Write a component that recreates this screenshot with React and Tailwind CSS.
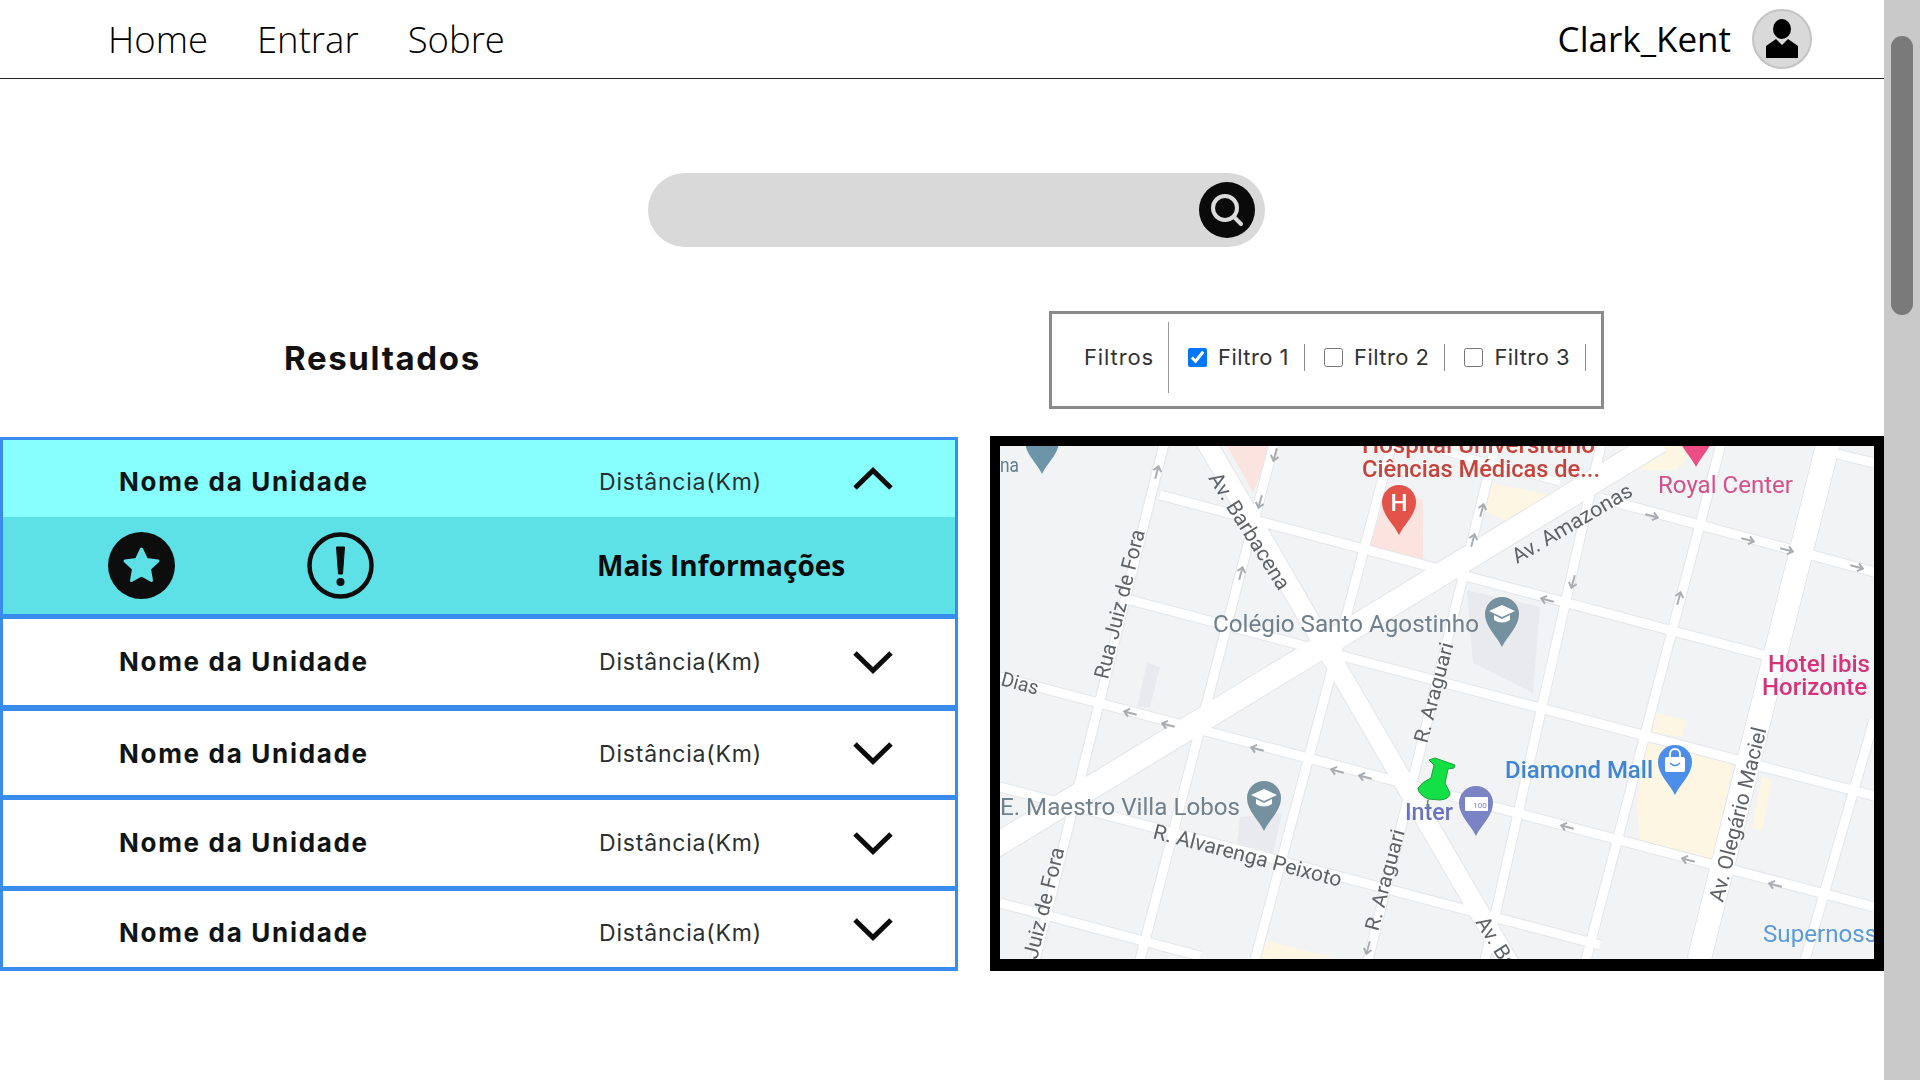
import React from 'react';

// Roads in page coordinates: [x1, y1, x2, y2, width]
const roads = [
  // E-W streets
  [1160, 495, 1790, 662, 9],
  [1600, 498, 1874, 572, 9],
  [1833, 453, 1874, 463, 9],
  [1130, 600, 1874, 796, 9],
  [1000, 677, 1874, 907, 9],
  [1000, 787, 1600, 945, 9],
  [1000, 903, 1200, 956, 9],
  [1440, 450, 1560, 482, 7],
  // N-S streets
  [1165, 440, 1035, 960, 9],
  [1275, 440, 1140, 960, 9],
  [1393, 440, 1255, 960, 9],
  [1497, 440, 1368, 960, 9],
  [1602, 440, 1485, 960, 9],
  [1722, 440, 1586, 960, 9],
  [1874, 720, 1805, 960, 9],
  // Avenues
  [1205, 440, 1510, 965, 19],
  [990, 849, 1660, 441, 23],
  [1829, 440, 1699, 960, 23],
];

const areas = [
  ['1370,547 1387,490 1423,500 1423,560', '#fbe3df'],
  ['1227,446 1273,446 1253,492', '#fbe3df'],
  ['1490,483 1567,498 1520,528 1483,510', '#fdf6e3'],
  ['1640,446 1700,446 1676,470 1620,470', '#fdf6e3'],
  ['1637,803 1647,743 1733,763 1713,860 1640,840', '#fdf6e3'],
  ['1656,713 1686,720 1682,737 1652,732', '#fdf6e3'],
  ['1762,777 1772,780 1762,830 1752,828', '#fdf6e3'],
  ['1263,940 1335,958 1258,959', '#fdf6e3'],
  ['1467,590 1540,607 1533,693 1473,663', '#e8eaed'],
  ['1240,817 1282,813 1273,853 1237,843', '#e8eaed'],
  ['1147,663 1160,667 1150,707 1137,707', '#e8eaed'],
];

// Direction arrows: [x, y, angle]
const arrows = [
  [1652, 516, 15], [1748, 540, 15], [1787, 550, 15], [1857, 567, 15],
  [1547, 600, 195], [1573, 582, 105], [1679, 598, 285], [1482, 510, 285], [1473, 540, 285],
  [1157, 472, 285], [1275, 455, 105], [1260, 502, 105], [1241, 573, 285], [1130, 713, 195],
  [1168, 725, 195], [1257, 749, 195], [1337, 771, 195], [1365, 777, 195], [1368, 948, 105],
  [1567, 827, 195], [1688, 860, 195], [1775, 885, 195],
];

const labels = [
  { t: 'na', x: 1000, y: 472, len: 19, size: 20, fill: '#5f7d8c' },
  { t: 'Hospital Universitário', x: 1362, y: 453, len: 233, size: 24, fill: '#c5443c', weight: 500 },
  { t: 'Ciências Médicas de...', x: 1362, y: 477, len: 238, size: 24, fill: '#c5443c', weight: 500 },
  { t: 'Royal Center', x: 1658, y: 493, len: 135, size: 23, fill: '#d4508a' },
  { t: 'Av. Amazonas', x: 1517, y: 564, len: 136, size: 21, fill: '#5f6368', angle: -30.5 },
  { t: 'Av. Barbacena', x: 1208, y: 478, len: 134, size: 21, fill: '#5f6368', angle: 58 },
  { t: 'Rua Juiz de Fora', x: 1108, y: 680, len: 153, size: 21, fill: '#5f6368', angle: -76 },
  { t: 'Colégio Santo Agostinho', x: 1213, y: 632, len: 266, size: 24, fill: '#70808c' },
  { t: 'Dias', x: 1000, y: 685, len: 38, size: 20, fill: '#5f6368', angle: 15 },
  { t: 'R. Araguari', x: 1427, y: 744, len: 103, size: 20, fill: '#5f6368', angle: -75 },
  { t: 'E. Maestro Villa Lobos', x: 1000, y: 815, len: 240, size: 24, fill: '#70808c' },
  { t: 'R. Alvarenga Peixoto', x: 1152, y: 838, len: 194, size: 21, fill: '#5f6368', angle: 14.6 },
  { t: 'Juiz de Fora', x: 1037, y: 960, len: 114, size: 21, fill: '#5f6368', angle: -76 },
  { t: 'R. Araguari', x: 1378, y: 932, len: 104, size: 20, fill: '#5f6368', angle: -75 },
  { t: 'Inter', x: 1405, y: 820, len: 48, size: 23, fill: '#6a72c0', weight: 500 },
  { t: 'Diamond Mall', x: 1505, y: 778, len: 148, size: 23, fill: '#3f85d6', weight: 500 },
  { t: 'Av. Olegário Maciel', x: 1723, y: 903, len: 179, size: 21, fill: '#5f6368', angle: -75.9 },
  { t: 'Av. Barbacena', x: 1475, y: 922, len: 134, size: 21, fill: '#5f6368', angle: 58 },
  { t: 'Supernosso', x: 1763, y: 942, len: 128, size: 23, fill: '#5a9bd8' },
  { t: 'Hotel ibis', x: 1768, y: 672, len: 102, size: 24, fill: '#d6337a', weight: 500 },
  { t: 'Horizonte', x: 1762, y: 695, len: 105, size: 24, fill: '#d6337a', weight: 500 },
];

const Pin = ({ x, y, fill }) => (
  <path
    d={`M${x} ${y + 33} C${x - 5} ${y + 22} ${x - 17} ${y + 13} ${x - 17} ${y} A17 17 0 1 1 ${x + 17} ${y} C${x + 17} ${y + 13} ${x + 5} ${y + 22} ${x} ${y + 33}Z`}
    fill={fill}
  />
);

const Hat = ({ x, y }) => (
  <g fill="#fff">
    <path d={`M${x} ${y - 9} L${x + 13} ${y - 3} L${x} ${y + 3} L${x - 13} ${y - 3}Z`} />
    <path d={`M${x - 8} ${y + 1} L${x} ${y + 5} L${x + 8} ${y + 1} V${y + 6} Q${x} ${y + 11} ${x - 8} ${y + 6}Z`} />
  </g>
);

const MapView = () => (
  <svg viewBox="1000 446 874 513" className="block h-full w-full font-[Roboto] blur-[0.5px]">
    <rect x="1000" y="446" width="874" height="513" fill="#f1f3f4" />
    {areas.map(([points, fill]) => (
      <polygon key={points} points={points} fill={fill} />
    ))}
    {roads.map(([x1, y1, x2, y2, w]) => (
      <line key={`e${x1}${y1}${x2}`} x1={x1} y1={y1} x2={x2} y2={y2} stroke="#e4e6e9" strokeWidth={w + 2} />
    ))}
    {roads.map(([x1, y1, x2, y2, w]) => (
      <line key={`r${x1}${y1}${x2}`} x1={x1} y1={y1} x2={x2} y2={y2} stroke="#ffffff" strokeWidth={w} />
    ))}
    {arrows.map(([x, y, angle]) => (
      <path
        key={`${x}-${y}`}
        transform={`translate(${x} ${y}) rotate(${angle})`}
        d="M-7 0H6M1 -4L6 0L1 4"
        fill="none"
        stroke="#a9adb1"
        strokeWidth="2"
      />
    ))}

    <Pin x={1042} y={441} fill="#6c95aa" />
    <Pin x={1399} y={502} fill="#e4534a" />
    <text x={1399} y={511} textAnchor="middle" fontSize="24" fontWeight="500" fill="#fff">H</text>
    <Pin x={1696} y={434} fill="#ec4d85" />
    <Pin x={1502} y={614} fill="#75909f" />
    <Hat x={1502} y={614} />
    <Pin x={1264} y={798} fill="#75909f" />
    <Hat x={1264} y={798} />
    <Pin x={1476} y={803} fill="#7a84c4" />
    <rect x={1465} y={797} width={23} height={14} rx={1} fill="#fff" />
    <text x={1480} y={808} textAnchor="middle" fontSize="8" fill="#7a84c4">100</text>
    <Pin x={1675} y={762} fill="#4d8ee8" />
    <rect x={1665} y={757} width={20} height={15} rx={2} fill="#fff" />
    <path d="M1670 757 V754 a5 5 0 0 1 10 0 V757" fill="none" stroke="#fff" strokeWidth="2" />
    <path d="M1670 763 q5 5 10 0" fill="none" stroke="#4d8ee8" strokeWidth="1.5" />

    {labels.map((l) => (
      <text
        key={`${l.t}${l.x}`}
        x={l.x}
        y={l.y}
        fontSize={l.size}
        fontWeight={l.weight || 400}
        fill={l.fill}
        textLength={l.len}
        lengthAdjust="spacingAndGlyphs"
        transform={l.angle ? `rotate(${l.angle} ${l.x} ${l.y})` : undefined}
      >
        {l.t}
      </text>
    ))}

    {/* green push pin */}
    <path
      d="M1429 760 L1435 758 L1455 765 L1454 768 L1448 769 L1445 783 L1450 793 Q1450 799 1440 800 L1428 799 Q1418 794 1418 788 Q1422 782 1431 778 L1434 765Z"
      fill="#12e044"
      stroke="#1f9e3c"
    />
    <line x1="1428" y1="800" x2="1427" y2="808" stroke="#6a8a70" strokeWidth="1.5" />
  </svg>
);

const Chevron = ({ up, className }) => (
  <svg viewBox="0 0 40 24" className={className} fill="none" stroke="#0c0c0c" strokeWidth="5">
    <path d={up ? 'M2 21 L20 3.5 L38 21' : 'M2 3 L20 20.5 L38 3'} />
  </svg>
);

const Row = ({ height, up, cyan, textShift }) => (
  <div
    className={`flex items-center pl-[116px] ${cyan ? 'bg-[#87ffff]' : 'bg-white'}`}
    style={{ height }}
  >
    <span
      className="w-[480px] font-[Inter] text-[26px] font-bold tracking-[0.065em] text-[#0f1414]"
      style={{ transform: `translateY(${textShift}px)` }}
    >
      Nome da Unidade
    </span>
    <span
      className="w-[254px] font-[Inter] text-[23px] tracking-[0.035em] text-[#2a3030]"
      style={{ transform: `translateY(${textShift + 1}px)` }}
    >
      Distância(Km)
    </span>
    <Chevron up={up} className="h-[24px] w-[40px]" />
  </div>
);

const Divider = ({ height }) => <div className="bg-[#3a8cec]" style={{ height }} />;

const Filter = ({ checked, label }) => (
  <>
    <label className="flex shrink-0 items-center gap-[11px] font-[Inter] text-[22px] tracking-[0.02em] whitespace-nowrap text-[#333]">
      <input type="checkbox" checked={checked} readOnly className="m-0 h-[19px] w-[19px] accent-[#0075ff]" />
      {label}
    </label>
    <span className="mr-[19px] ml-[15px] h-[27px] w-px shrink-0 bg-[#8a8a8a]" />
  </>
);

const App = () => (
  <div className="flex h-screen overflow-hidden bg-white">
    <main className="w-[1884px] shrink-0">
      <header className="flex h-[79px] items-center justify-between border-b border-[#222] pr-[72px] pl-[108px] font-['Open_Sans'] text-[36.5px] text-black">
        <nav className="flex gap-[49px] font-light">
          <span>Home</span>
          <span>Entrar</span>
          <span>Sobre</span>
        </nav>
        <div className="flex items-center gap-[21px]">
          <span className="text-[35px]">Clark_Kent</span>
          <div className="flex h-[60px] w-[60px] items-center justify-center rounded-full border-2 border-[#c4c4c4] bg-[#d9d9d9]">
            <svg viewBox="0 0 34 40" className="h-[40px] w-[34px]" fill="#000">
              <ellipse cx="17" cy="10" rx="9" ry="10" />
              <path d="M11 20 L17 26 L23 20 L33 27 V39 H1 V27Z" />
            </svg>
          </div>
        </div>
      </header>

      <div className="mt-[94px] ml-[648px] flex h-[74px] w-[617px] items-center justify-end rounded-full bg-[#d9d9d9] pr-[10px]">
        <button className="flex h-[56px] w-[56px] items-center justify-center rounded-full bg-[#0a0a0a]">
          <svg viewBox="0 0 34 34" className="h-[34px] w-[34px]" fill="none" stroke="#dcdcdc" strokeWidth="4">
            <circle cx="15" cy="15" r="12" />
            <path d="M24 24 L31 31" strokeLinecap="round" />
          </svg>
        </button>
      </div>

      <div className="mt-[64px] flex items-center">
        <h2 className="w-[1049px] pb-[2px] pl-[284px] font-[Inter] text-[33px] font-bold tracking-[0.05em] text-[#111]">
          Resultados
        </h2>
        <div className="flex h-[98px] w-[555px] items-center border-[3px] border-[#8a8a8a] pb-[6px] pl-[32px]">
          <span className="font-[Inter] text-[22px] tracking-[0.04em] text-[#333]">Filtros</span>
          <span className="mr-[19px] ml-[14px] h-[71px] w-px shrink-0 bg-[#9a9a9a]" />
          <Filter checked label="Filtro 1" />
          <Filter label="Filtro 2" />
          <Filter label="Filtro 3" />
        </div>
      </div>

      <div className="mt-[27px] flex items-start">
        <div className="mt-[1px] w-[958px] border-x-[3px] border-[#3a8cec]">
          <Divider height={3} />
          <Row height={77} up cyan textShift={3} />
          <div className="flex h-[97px] items-center bg-[#5de0e6]">
            <svg viewBox="0 0 67 67" className="ml-[105px] h-[67px] w-[67px]">
              <circle cx="33.5" cy="33.5" r="33.5" fill="#0d0d0d" />
              <path
                d="M33.5 17 L38.5 27.5 L50 29 L41.5 37 L43.5 48.5 L33.5 43 L23.5 48.5 L25.5 37 L17 29 L28.5 27.5Z"
                fill="#5de0e6"
                stroke="#5de0e6"
                strokeWidth="3"
                strokeLinejoin="round"
              />
            </svg>
            <svg viewBox="0 0 67 67" className="ml-[132px] h-[67px] w-[67px]">
              <circle cx="33.5" cy="33.5" r="31" fill="none" stroke="#0d0d0d" strokeWidth="4.5" />
              <path d="M29.5 15 H37.5 L35.5 42 H31.5Z" fill="#0d0d0d" stroke="#0d0d0d" strokeLinejoin="round" />
              <circle cx="33.5" cy="50" r="4" fill="#0d0d0d" />
            </svg>
            <span className="ml-[223px] pb-[2px] font-['Open_Sans'] text-[28px] font-bold text-[#050a0a]">Mais Informações</span>
          </div>
          <Divider height={5} />
          <Row height={86} textShift={-1} />
          <Divider height={6} />
          <Row height={84} textShift={0} />
          <Divider height={5} />
          <Row height={86} textShift={-1} />
          <Divider height={5} />
          <Row height={76} textShift={3} />
          <Divider height={4} />
        </div>
        <div className="ml-[32px] h-[535px] w-[894px] border-[10px] border-b-[12px] border-black">
          <MapView />
        </div>
      </div>
    </main>

    <aside className="h-screen w-[36px] bg-[#c9c9c9] pt-[36px] pl-[7px]">
      <div className="h-[279px] w-[22px] rounded-full bg-[#7a7a7a]" />
    </aside>
  </div>
);

export default App;
